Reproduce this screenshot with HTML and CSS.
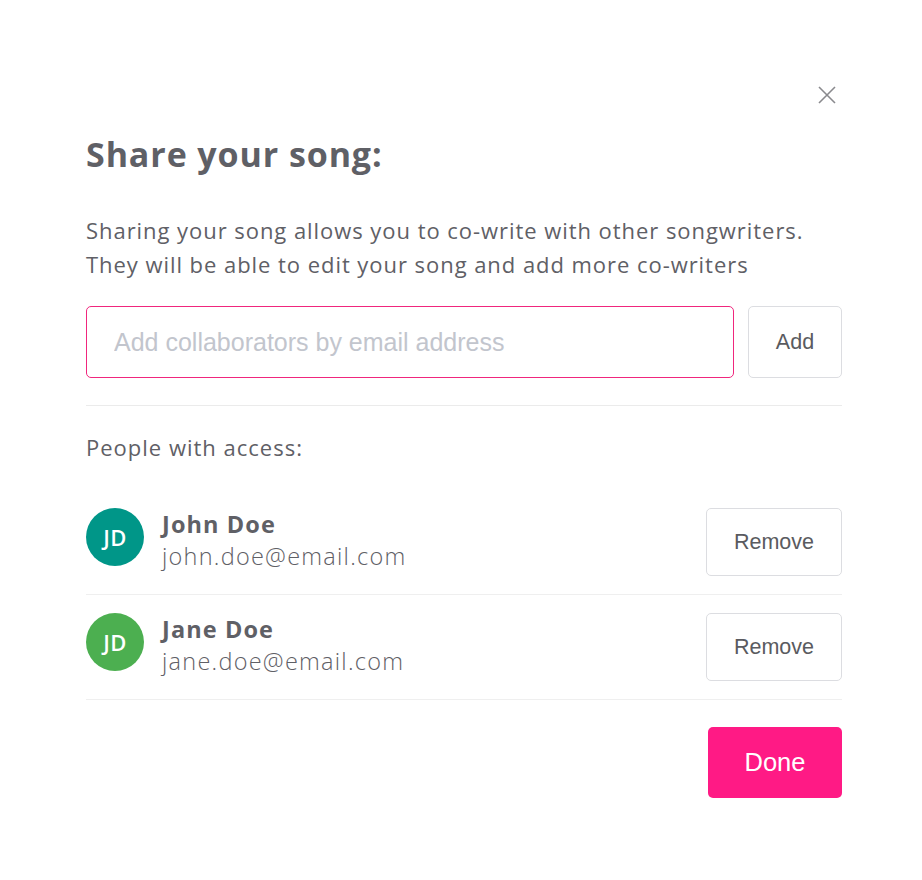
FILE: index.html
```html
<!DOCTYPE html>
<html>
<head>
<meta charset="utf-8">
<link rel="stylesheet" href="styles.css">
</head>
<body>
<div class="modal">
  <div class="close-row">
    <svg class="close" width="20" height="20" viewBox="0 0 20 20"><path d="M2 2L18 18M18 2L2 18" stroke="#8a8a8e" stroke-width="1.6" fill="none"/></svg>
  </div>
  <h1 class="title">Share your song:</h1>
  <p class="desc">Sharing your song allows you to co-write with other songwriters.<br>They will be able to edit your song and add more co-writers</p>
  <div class="add-row">
    <input class="email" type="text" placeholder="Add collaborators by email address">
    <button class="btn add">Add</button>
  </div>
  <div class="divider"></div>
  <div class="label">People with access:</div>
  <div class="people">
    <div class="person">
      <div class="avatar teal">JD</div>
      <div class="info">
        <div class="name">John Doe</div>
        <div class="mail">john.doe@email.com</div>
      </div>
      <button class="btn remove">Remove</button>
    </div>
    <div class="person">
      <div class="avatar green">JD</div>
      <div class="info">
        <div class="name">Jane Doe</div>
        <div class="mail">jane.doe@email.com</div>
      </div>
      <button class="btn remove">Remove</button>
    </div>
  </div>
  <div class="footer">
    <button class="done">Done</button>
  </div>
</div>
</body>
</html>
```
FILE: styles.css
```css
html, body { margin: 0; padding: 0; background: #fff; }
body { font-family: "Open Sans", Lato, sans-serif; color: #5f6066; }
.modal { width: 756px; margin-left: 86px; padding-top: 85px; }
.close-row { display: flex; justify-content: flex-end; padding-right: 5px; height: 20px; }
.close { display: block; }
.title { margin: 27px 0 0; font-size: 34px; font-weight: 700; line-height: 44px; letter-spacing: 0.9px; color: #5f6066; }
.desc { margin: 37px 0 0; font-size: 22px; line-height: 34px; font-weight: 400; letter-spacing: 0.95px; }
.add-row { display: flex; gap: 14px; margin-top: 25px; }
.email { flex: 1; height: 72px; box-sizing: border-box; border: 1px solid #f0267d; border-radius: 5px; padding: 0 27px; font-family: "Liberation Sans", Arial, sans-serif; font-size: 25px; color: #333; outline: none; }
.email::placeholder { color: #c2c5cd; }
.btn { background: #fff; border: 1px solid #dcdde1; border-radius: 5px; font-family: "Liberation Sans", Arial, sans-serif; font-size: 21.5px; color: #5a5b60; padding: 0; }
.add { width: 94px; height: 72px; }
.divider { height: 1px; background: #ebebeb; margin-top: 27px; }
.label { margin-top: 25px; font-size: 22px; line-height: 32px; letter-spacing: 1px; }
.people { margin-top: 45px; }
.person { display: flex; align-items: flex-start; padding: 18px 0 18px; border-bottom: 1px solid #efefef; }
.person:first-child { padding-top: 0; }
.avatar { width: 58px; height: 58px; border-radius: 50%; color: #fff; display: flex; align-items: center; justify-content: center; font-family: "Open Sans", sans-serif; font-weight: 600; font-size: 22px; letter-spacing: 0.5px; }
.teal { background: #009688; }
.green { background: #4caf50; }
.info { flex: 1; margin-left: 18px; }
.name { font-size: 23.5px; font-weight: 700; line-height: 32px; letter-spacing: 1.1px; }
.mail { font-size: 23.5px; font-weight: 300; line-height: 32px; letter-spacing: 1.25px; }
.remove { width: 136px; height: 68px; }
.footer { display: flex; justify-content: flex-end; margin-top: 27px; }
.done { width: 134px; height: 71px; background: #ff1a85; color: #fff; border: none; border-radius: 5px; font-family: "Liberation Sans", Arial, sans-serif; font-size: 25.5px; }
```
